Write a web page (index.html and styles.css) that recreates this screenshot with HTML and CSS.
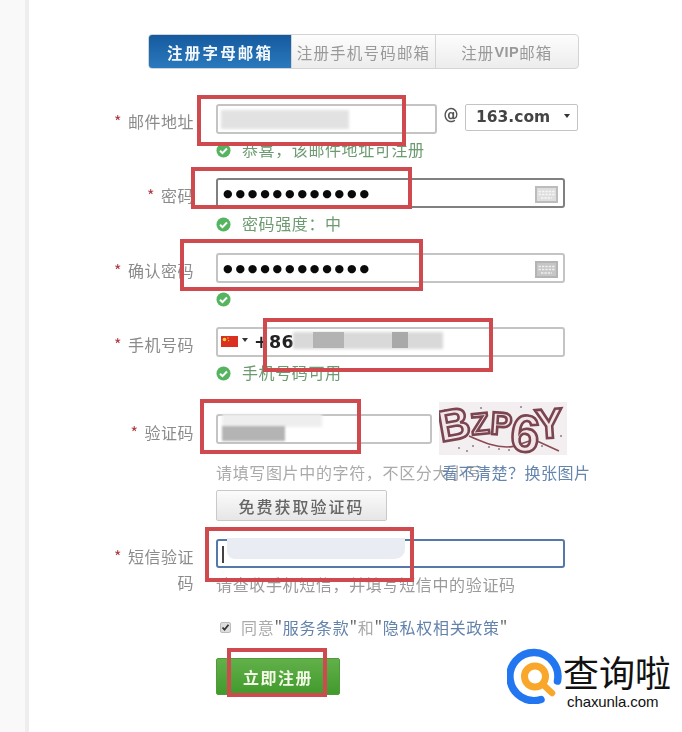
FILE: index.html
```html
<!DOCTYPE html>
<html lang="zh-CN">
<head>
<meta charset="utf-8">
<title>注册邮箱</title>
<link rel="stylesheet" href="styles.css">
</head>
<body>
<div class="page">
  <aside class="rail"></aside>
  <main class="main">
    <form class="form">
      <nav class="tabs">
        <a class="tab tab-active">注册字母邮箱</a>
        <a class="tab">注册手机号码邮箱</a>
        <a class="tab tab-vip">注册<b class="vip">VIP</b>邮箱</a>
      </nav>

      <div class="row row-first">
        <label class="label"><span class="star">*</span> 邮件地址</label>
        <div class="field">
          <div class="line">
            <div class="input input-email"><i class="smudge smudge-email"></i></div>
            <span class="at">@</span>
            <div class="domain">163.com<i class="caret"></i></div>
          </div>
          <div class="msg">
            <svg class="ok" viewBox="0 0 16 16"><circle cx="8" cy="8" r="7.5" fill="#55b45f"/><path d="M4.3 8.2l2.6 2.6 4.8-5" fill="none" stroke="#fff" stroke-width="2.2"/></svg>
            <span class="msg-text">恭喜&#xFF0C;该邮件地址可注册</span>
          </div>
        </div>
      </div>

      <div class="row">
        <label class="label"><span class="star">*</span> 密码</label>
        <div class="field">
          <div class="input input-full input-dark">
            <span class="dots">●●●●●●●●●●●●</span>
            <svg class="kbd" viewBox="0 0 23 17"><rect x="1" y="1" width="21" height="15" fill="#dedede" stroke="#bcbcbc" stroke-width="2"/><path d="M3.5 5.5h16M3.5 8.500h16M6 12h11" stroke="#f6f6f6" stroke-width="1.5" stroke-dasharray="2.4 1" fill="none"/></svg>
          </div>
          <div class="msg">
            <svg class="ok" viewBox="0 0 16 16"><circle cx="8" cy="8" r="7.5" fill="#55b45f"/><path d="M4.3 8.2l2.6 2.6 4.8-5" fill="none" stroke="#fff" stroke-width="2.2"/></svg>
            <span class="msg-text">密码强度&#xFF1A;中</span>
          </div>
        </div>
      </div>

      <div class="row row-confirm">
        <label class="label"><span class="star">*</span> 确认密码</label>
        <div class="field">
          <div class="input input-full">
            <span class="dots">●●●●●●●●●●●●</span>
            <svg class="kbd" viewBox="0 0 23 17"><rect x="1" y="1" width="21" height="15" fill="#c6c6c6" stroke="#b4b4b4" stroke-width="2"/><path d="M3.5 5.5h16M3.5 8.500h16M6 12h11" stroke="#efefef" stroke-width="1.5" stroke-dasharray="2.4 1" fill="none"/></svg>
          </div>
          <div class="msg">
            <svg class="ok" viewBox="0 0 16 16"><circle cx="8" cy="8" r="7.5" fill="#55b45f"/><path d="M4.3 8.2l2.6 2.6 4.8-5" fill="none" stroke="#fff" stroke-width="2.2"/></svg>
          </div>
        </div>
      </div>

      <div class="row">
        <label class="label"><span class="star">*</span> 手机号码</label>
        <div class="field">
          <div class="input input-full">
            <svg class="flag" viewBox="0 0 17 11"><rect width="17" height="11" fill="#d9301f"/><circle cx="3.5" cy="3.5" r="1.8" fill="#f4d03f"/><circle cx="7" cy="2" r=".7" fill="#f4d03f"/><circle cx="7.6" cy="4.6" r=".7" fill="#f4d03f"/></svg>
            <i class="caret caret-flag"></i>
            <span class="phone">+86</span>
            <i class="smudge smudge-phone"></i>
            <i class="smudge smudge-phone-a"></i>
            <i class="smudge smudge-phone-b"></i>
          </div>
          <div class="msg">
            <svg class="ok" viewBox="0 0 16 16"><circle cx="8" cy="8" r="7.5" fill="#55b45f"/><path d="M4.3 8.2l2.6 2.6 4.8-5" fill="none" stroke="#fff" stroke-width="2.2"/></svg>
            <span class="msg-text">手机号码可用</span>
          </div>
        </div>
      </div>

      <div class="row row-captcha">
        <label class="label label-captcha"><span class="star">*</span> 验证码</label>
        <div class="field">
          <div class="line line-captcha">
            <div class="input input-code"><i class="smudge smudge-code-top"></i><i class="smudge smudge-code"></i></div>
            <svg class="captcha" viewBox="0 0 128 53">
              <rect width="128" height="53" fill="#f3eef0"/>
              <g fill="#8d7a86"><circle cx="6" cy="8" r="1"/><circle cx="20" cy="46" r="1"/><circle cx="42" cy="6" r="1"/><circle cx="60" cy="47" r="1"/><circle cx="82" cy="5" r="1"/><circle cx="103" cy="44" r="1"/><circle cx="122" cy="34" r="1"/><circle cx="12" cy="38" r="1"/><circle cx="34" cy="44" r="1"/><circle cx="118" cy="8" r="1"/><circle cx="50" cy="45" r="1"/><circle cx="70" cy="48" r="1"/><circle cx="28" cy="49" r="1"/><circle cx="96" cy="9" r="1"/></g>
              <path d="M30 34c14 6 24 11 38 11 14 0 20-9 30-6l22 10" fill="none" stroke="#8c4a55" stroke-width="1.6"/>
              <text class="captcha-text"><tspan class="cap-b" x="2" y="40" rotate="-10">B</tspan><tspan class="cap-z" x="33" y="33" rotate="-6">Z</tspan><tspan class="cap-p" x="51" y="32" rotate="4">P</tspan><tspan class="cap-6" x="70" y="48" rotate="6">6</tspan><tspan class="cap-y" x="97" y="37" rotate="-4">Y</tspan></text>
            </svg>
          </div>
          <div class="hint">请填写图片中的字符&#xFF0C;不区分大小写<a class="refresh">看不清楚&#xFF1F;换张图片</a></div>
          <button class="btn-get" type="button">免费获取验证码</button>
        </div>
      </div>

      <div class="row row-sms">
        <label class="label"><span class="star">*</span> 短信验证码</label>
        <div class="field">
          <div class="input input-full input-focus"><i class="smudge smudge-sms"></i><i class="cursor"></i></div>
          <div class="hint hint-sms">请查收手机短信&#xFF0C;并填写短信中的验证码</div>
        </div>
      </div>

      <div class="row row-agree">
        <span></span>
        <div class="agree">
          <svg class="check" viewBox="0 0 11 11"><rect x=".5" y=".5" width="10" height="10" rx="1.5" fill="#ddd" stroke="#bbb"/><path d="M2.5 5.5l2 2.2 4-5" fill="none" stroke="#333" stroke-width="1.8"/></svg>
          <span>同意<q class="quote">"</q><a class="link">服务条款</a><q class="quote">"</q>和<q class="quote">"</q><a class="link">隐私权相关政策</a><q class="quote">"</q></span>
        </div>
      </div>

      <div class="row row-submit">
        <span></span>
        <div><button class="btn-submit" type="button">立即注册</button></div>
      </div>
    </form>
  </main>

  <div class="mark mark-1"></div>
  <div class="mark mark-2"></div>
  <div class="mark mark-3"></div>
  <div class="mark mark-4"></div>
  <div class="mark mark-5"></div>
  <div class="mark mark-6"></div>
  <div class="mark mark-7"></div>

  <div class="logo">
    <svg class="logo-icon" viewBox="0 0 56 56">
      <path d="M50.5 33A24 24 0 1 0 34 51.5" fill="none" stroke="#2277f0" stroke-width="7.5" stroke-linecap="round"/>
      <circle cx="28" cy="28.500" r="10.500" fill="none" stroke="#f9a72b" stroke-width="7"/>
      <path d="M37 37.500l8 7.500" stroke="#f9a72b" stroke-width="6.500" stroke-linecap="round"/>
    </svg>
    <div class="logo-words">
      <div class="logo-cn">查询啦</div>
      <div class="logo-en">chaxunla.com</div>
    </div>
  </div>
</div>
</body>
</html>
```

FILE: styles.css
```css
* { box-sizing: border-box; }
html, body { margin: 0; height: 732px; overflow: hidden; background: #fff; }
body { font-family: "Noto Sans CJK SC", "Liberation Sans", sans-serif; font-size: 16px; color: #888; }

.page { position: relative; display: flex; width: 682px; height: 732px; }
.rail { flex: 0 0 29px; background: #f9f9f9; border-right: 4px solid #eeeeee; }
.main { flex: 1; padding-top: 34px; }
.form { filter: blur(0.45px); }

.tabs { display: flex; width: 431px; height: 35px; margin-left: 119px; border: 1px solid #d4d4d4; border-radius: 4px; overflow: hidden; background: linear-gradient(#fdfdfd, #ececec); }
.tab { flex: 1; display: flex; align-items: center; justify-content: center; font-size: 15.5px; letter-spacing: 1px; color: #999; white-space: nowrap; border-left: 1px solid #d4d4d4; }
.tab:nth-child(2) { letter-spacing: 1.2px; }
.tab-active { border-left: 0; color: #f4f8fc; font-weight: 700; letter-spacing: 2.2px; background: linear-gradient(#155a9f, #2b79bd); }
.vip { font: 700 14.5px "Liberation Sans", sans-serif; letter-spacing: .5px; }

.row { display: grid; grid-template-columns: 165px 1fr; column-gap: 22px; margin-top: 18px; }
.row-first { margin-top: 35px; }
.row-confirm { margin-top: 19px; }
.row-captcha { margin-top: 19px; }
.row-sms { margin-top: 18px; }
.row-agree { margin-top: 22px; }
.row-submit { margin-top: 21px; }

.label { padding: 4px 0 0 80px; line-height: 26px; letter-spacing: .5px; text-align: right; color: #8b8b8b; }
.label-captcha { padding-top: 17px; }
.star { color: #b03a42; margin-right: 2px; }

.line { display: flex; align-items: flex-start; }
.line-captcha { align-items: center; }

.input { position: relative; display: flex; align-items: center; height: 30px; border: 2px solid #c4c4c4; border-radius: 3px; background: #fff; }
.input-email { width: 221px; }
.input-code { width: 216px; }
.input-full { width: 349px; }
.input-dark { border-color: #808080; }
.input-focus { border-color: #5577aa; height: 29px; }

.at { width: 28px; margin-top: 2px; text-align: center; font: 700 15px "DejaVu Sans", sans-serif; color: #555; }
.domain { position: relative; width: 113px; height: 27px; padding-left: 10px; border: 1px solid #c4c4c4; border-radius: 2px; font: 700 15.5px/25px "DejaVu Sans", sans-serif; color: #444; }
.caret { position: absolute; right: 7px; top: 9px; width: 0; height: 0; border: 3px solid transparent; border-top: 4px solid #333; }
.caret-flag { left: 24px; right: auto; top: 9px; }

.msg { display: flex; align-items: center; gap: 11px; height: 20px; margin-top: 6px; letter-spacing: .6px; color: #6d9a70; }
.msg-text { margin-top: -2px; }
.ok { width: 15px; height: 15px; flex: none; }

.dots { position: absolute; left: 5px; font: 11px/1 "DejaVu Sans", sans-serif; letter-spacing: 2.8px; color: #0a0a0a; }
.kbd { position: absolute; right: 5px; top: 6px; width: 23px; height: 17px; }
.flag { position: absolute; left: 3px; top: 7px; width: 17px; height: 11px; }
.phone { position: absolute; left: 36px; font: 700 17.5px "DejaVu Sans", sans-serif; letter-spacing: .3px; color: #222; }

.smudge { position: absolute; display: block; }
.smudge-email { left: 3px; top: 4px; width: 128px; height: 19px; background: #e2e2e2; filter: blur(1.5px); }
.smudge-phone { left: 75px; top: 3px; width: 150px; height: 17px; background: #d9d9d9; filter: blur(1.5px); }
.smudge-phone-a { left: 95px; top: 3px; width: 31px; height: 16px; background: #b3b3b3; }
.smudge-phone-b { left: 174px; top: 3px; width: 16px; height: 16px; background: #a9a9a9; }
.smudge-code-top { left: 4px; top: -2px; width: 100px; height: 13px; background: #eeeeee; filter: blur(1.5px); }
.smudge-code { left: 4px; top: 10px; width: 63px; height: 15px; background: #b4b4b4; filter: blur(1px); }
.smudge-sms { left: 9px; top: -3px; width: 178px; height: 21px; border-radius: 0 0 10px 8px; background: #e9edf3; }
.cursor { position: absolute; left: 4px; top: 5px; width: 1.5px; height: 17px; background: #444; }

.captcha { width: 128px; height: 53px; margin-left: 7px; flex: none; }
.captcha-text { font-family: "Liberation Sans", sans-serif; font-weight: 700; fill: #f1e6e8; stroke: #7a4450; stroke-width: 2.6px; }
.cap-b { font-size: 44px; }
.cap-z { font-size: 30px; }
.cap-p { font-size: 32px; }
.cap-6 { font-size: 52px; }
.cap-y { font-size: 42px; }

.hint { position: relative; height: 20px; margin-top: 8px; line-height: 18px; letter-spacing: .65px; color: #aaa; white-space: nowrap; }
.hint-sms { margin-top: 7px; color: #9a9a9a; }
.refresh { position: absolute; left: 226px; top: 0; letter-spacing: .5px; color: #6585ad; }

.btn-get { display: block; width: 171px; height: 31px; margin-top: 7px; padding: 0; border: 1px solid #c9c9c9; border-radius: 2px; background: linear-gradient(#fbfbfb, #e6e6e6); font: 500 16px "Noto Sans CJK SC", sans-serif; letter-spacing: 2px; color: #666; }

.agree { display: flex; align-items: center; gap: 10px; height: 20px; padding-left: 4px; letter-spacing: .7px; color: #aaa; white-space: nowrap; }
.check { width: 11px; height: 11px; flex: none; }
.link { color: #6483ab; }
.quote { quotes: none; color: #666; }

.btn-submit { display: block; width: 124px; height: 37px; padding: 0; border: 1px solid #4f9b3a; border-radius: 2px; background: linear-gradient(#62b04a, #419a2c); font: 700 16px "Noto Sans CJK SC", sans-serif; letter-spacing: 1.5px; color: #f3f9e6; }

.mark { position: absolute; border: 4px solid #cf4a4e; }
.mark-1 { left: 197px; top: 95px; width: 209px; height: 51px; }
.mark-2 { left: 191px; top: 167px; width: 221px; height: 42px; }
.mark-3 { left: 180px; top: 239px; width: 243px; height: 52px; }
.mark-4 { left: 263px; top: 318px; width: 230px; height: 54px; }
.mark-5 { left: 200px; top: 399px; width: 161px; height: 55px; }
.mark-6 { left: 205px; top: 527px; width: 209px; height: 55px; }
.mark-7 { left: 227px; top: 648px; width: 100px; height: 49px; }

.logo { position: absolute; left: 507px; top: 648px; display: flex; }
.logo-icon { width: 56px; height: 56px; flex: none; }
.logo-words { display: flex; flex-direction: column; align-items: flex-start; }
.logo-cn { font-size: 36px; line-height: 46px; color: #111; white-space: nowrap; }
.logo-en { margin-left: 4px; font: 15px/16px "Liberation Sans", sans-serif; letter-spacing: -.1px; color: #111; }
```
